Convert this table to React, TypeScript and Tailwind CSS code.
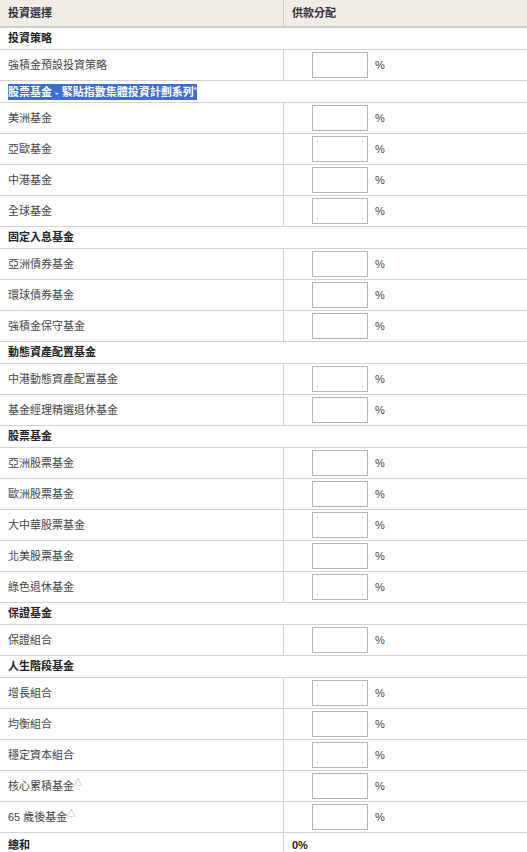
const font = {
  fontFamily: '"Liberation Sans", "Noto Sans CJK TC", sans-serif',
};

type Row =
  | { kind: "section"; label: string; highlight?: boolean; mark?: string }
  | { kind: "fund"; label: string; mark?: string };

const rows: Row[] = [
  { kind: "section", label: "投資策略" },
  { kind: "fund", label: "強積金預設投資策略" },
  { kind: "section", label: "股票基金 - 緊貼指數集體投資計劃系列", highlight: true, mark: "*" },
  { kind: "fund", label: "美洲基金" },
  { kind: "fund", label: "亞歐基金" },
  { kind: "fund", label: "中港基金" },
  { kind: "fund", label: "全球基金" },
  { kind: "section", label: "固定入息基金" },
  { kind: "fund", label: "亞洲債券基金" },
  { kind: "fund", label: "環球債券基金" },
  { kind: "fund", label: "強積金保守基金" },
  { kind: "section", label: "動態資產配置基金" },
  { kind: "fund", label: "中港動態資產配置基金" },
  { kind: "fund", label: "基金經理精選退休基金" },
  { kind: "section", label: "股票基金" },
  { kind: "fund", label: "亞洲股票基金" },
  { kind: "fund", label: "歐洲股票基金" },
  { kind: "fund", label: "大中華股票基金" },
  { kind: "fund", label: "北美股票基金" },
  { kind: "fund", label: "綠色退休基金" },
  { kind: "section", label: "保證基金" },
  { kind: "fund", label: "保證組合" },
  { kind: "section", label: "人生階段基金" },
  { kind: "fund", label: "增長組合" },
  { kind: "fund", label: "均衡組合" },
  { kind: "fund", label: "穩定資本組合" },
  { kind: "fund", label: "核心累積基金", mark: "△" },
  { kind: "fund", label: "65 歲後基金", mark: "△" },
];

function SectionRow({ row }: { row: Extract<Row, { kind: "section" }> }) {
  return (
    <div className="flex h-[22px] items-center border-b border-[#d2d2d2] px-2 text-[11px] font-bold text-[#222]">
      {row.highlight ? (
        <span className="bg-[#3a6dd5] py-[1px] leading-[14px] text-white">
          {row.label}
          <sup className="text-[7px]">{row.mark}</sup>
        </span>
      ) : (
        row.label
      )}
    </div>
  );
}

function FundRow({ row }: { row: Extract<Row, { kind: "fund" }> }) {
  return (
    <div className="flex h-[31px] border-b border-[#d2d2d2] text-[11px] text-[#444]">
      <div className="flex w-[284px] items-center border-r border-[#d2d2d2] px-2">
        {row.label}
        {row.mark && (
          <sup className="relative -top-[3px] text-[8px] text-[#888]">{row.mark}</sup>
        )}
      </div>
      <div className="flex items-center pl-[28px]">
        <input
          type="text"
          className="h-[26px] w-[56px] border border-[#b5b5b5] bg-white"
        />
        <span className="ml-[7px] text-[11px] text-[#444]">%</span>
      </div>
    </div>
  );
}

export default function App() {
  return (
    <div className="w-[527px] bg-white" style={font}>
      <div className="flex h-[28px] border-b-2 border-[#cfcdc6] bg-[#efede5] text-[11px] font-bold text-[#333]">
        <div className="flex w-[284px] items-center border-r border-[#d2d0c8] px-2">
          投資選擇
        </div>
        <div className="flex items-center px-2">供款分配</div>
      </div>
      {rows.map((row, i) =>
        row.kind === "section" ? (
          <SectionRow key={i} row={row} />
        ) : (
          <FundRow key={i} row={row} />
        ),
      )}
      <div className="flex h-[22px] text-[11px] font-bold text-[#222]">
        <div className="flex w-[284px] items-center border-r border-[#d2d2d2] px-2 pt-[2px]">
          總和
        </div>
        <div className="flex items-center px-2 pt-[2px]">0%</div>
      </div>
    </div>
  );
}
